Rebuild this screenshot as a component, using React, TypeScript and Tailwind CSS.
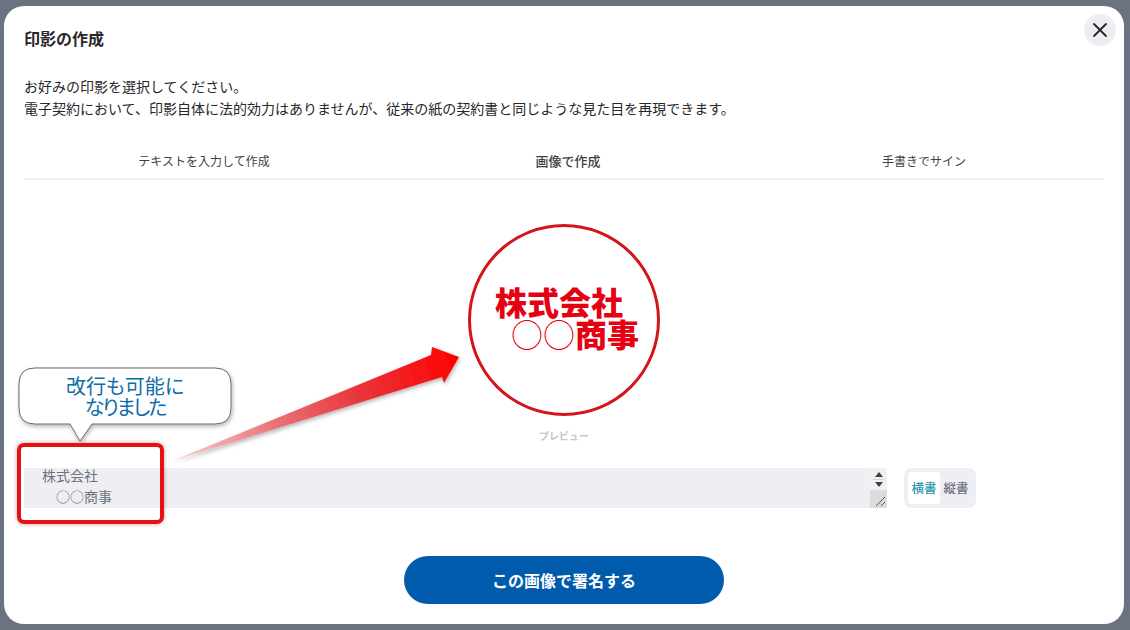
import { useEffect, useRef } from "react";

const font = { fontFamily: '"Noto Sans CJK JP", "Noto Sans", sans-serif' };

function StampPreview() {
  return (
    <div className="flex flex-col items-center">
      <div className="flex h-[192px] w-[192px] flex-col justify-center rounded-full border-[3px] border-[#d3151a] pb-[7px] pl-[24px] text-[32px] font-black leading-[32px] text-[#e60012]">
        <div className="whitespace-pre">株式会社</div>
        <div className="whitespace-pre pl-[16px]">
          <span className="font-extralight">○○</span>商事
        </div>
      </div>
      <div className="mt-[14px] text-[10px] font-bold leading-[12px] text-[#c4c6cb]">プレビュー</div>
    </div>
  );
}

function ScrollbarOverlay() {
  return (
    <div className="pointer-events-none absolute right-0 top-0 flex h-[40px] w-[17px] flex-col">
      <div className="flex flex-1 flex-col items-center justify-center gap-[2px] bg-[#f1f1f3]">
        <svg width="8" height="5" viewBox="0 0 8 5">
          <path d="M4 0 L8 5 H0 Z" fill="#3f3f46" />
        </svg>
        <div className="h-px w-[12px] bg-[#d4d4d8]" />
        <svg width="8" height="5" viewBox="0 0 8 5">
          <path d="M0 0 H8 L4 5 Z" fill="#3f3f46" />
        </svg>
      </div>
      <div className="h-[18px] bg-[#dcdcdc]">
        <svg width="17" height="18" viewBox="0 0 17 18" stroke="#52525b" strokeWidth="1">
          <path d="M6 16 L15 7 M11 16 L15 12" />
        </svg>
      </div>
    </div>
  );
}

function Annotations() {
  return (
    <>
      <svg className="pointer-events-none absolute left-0 top-0" width="1130" height="630">
        <defs>
          <linearGradient id="arrowFill" x1="170" y1="462" x2="460" y2="355" gradientUnits="userSpaceOnUse">
            <stop offset="0" stopColor="#f8d5d7" />
            <stop offset="0.35" stopColor="#e9757a" />
            <stop offset="0.65" stopColor="#e8353a" />
            <stop offset="1" stopColor="#ff0000" />
          </linearGradient>
          <filter id="softShadow" x="-10%" y="-20%" width="120%" height="140%">
            <feDropShadow dx="1" dy="2" stdDeviation="2" floodColor="#000" floodOpacity="0.3" />
          </filter>
        </defs>
        <path d="M172 461 L431 355 L432 347 L459 357 L444 383 L442 377 Z" fill="url(#arrowFill)" filter="url(#softShadow)" />
        <path
          d="M35 368 H215 Q231 368 231 384 V408 Q231 424 215 424 H92 L80 441 L70 424 H35 Q19 424 19 408 V384 Q19 368 35 368 Z"
          fill="#fff"
          stroke="#6b6b6b"
          strokeWidth="1"
          filter="url(#softShadow)"
        />
      </svg>
      <div className="absolute left-[19px] top-[375px] w-[212px] text-center text-[20px] leading-[21px] text-[#0f6ca8] [font-feature-settings:'palt']">
        改行も可能に
        <br />
        <span className="tracking-[-2px]">なりました</span>
      </div>
      <div className="absolute left-[17px] top-[443px] h-[81px] w-[147px] rounded-[7px] border-[4px] border-[#e60f12] shadow-[0_0_4px_rgba(120,0,0,0.4)]" />
    </>
  );
}

export default function App() {
  const textRef = useRef<HTMLTextAreaElement>(null);

  useEffect(() => {
    if (textRef.current) textRef.current.scrollTop = 3;
  }, []);

  return (
    <div style={font} className="relative h-[630px] w-[1130px] overflow-hidden bg-[#6b7280] px-[4px] pb-[6px] pt-[6px]">
      <div className="relative h-[618px] w-[1120px] rounded-[20px] bg-white px-[20px] pt-[21px]">
        <div className="flex items-center justify-between">
          <h1 className="text-[16px] font-bold leading-[22px] text-[#27272a]">印影の作成</h1>
          <button className="absolute right-[8px] top-[8px] flex h-[32px] w-[32px] items-center justify-center rounded-full bg-[#eeeef2]">
            <svg width="16" height="16" viewBox="0 0 16 16" fill="none" stroke="#27272a" strokeWidth="1.8" strokeLinecap="round">
              <path d="M2 2 L14 14 M14 2 L2 14" />
            </svg>
          </button>
        </div>

        <div className="mt-[26px] text-[14px] leading-[22px] text-[#27272a]">
          <p>お好みの印影を選択してください。</p>
          <p>電子契約において、印影自体に法的効力はありませんが、従来の紙の契約書と同じような見た目を再現できます。</p>
        </div>

        <div className="mt-[33px] grid grid-cols-3 border-b-2 border-[#eef2f7] pb-[8px] text-center text-[12px] leading-[18px] text-[#3f3f46]">
          <div>テキストを入力して作成</div>
          <div className="pl-[8px] text-[13px] font-medium">画像で作成</div>
          <div>手書きでサイン</div>
        </div>

        <div className="mt-[44px]">
          <StampPreview />
        </div>

        <div className="mt-[26px] flex items-center">
          <div className="relative h-[40px] w-[863px]">
            <textarea
              ref={textRef}
              readOnly
              rows={2}
              value={"株式会社\n　○○商事"}
              className="block h-[40px] w-full overflow-hidden bg-[#efeef3] pb-[12px] pl-[18px] pr-[18px] text-[14px] leading-[21px] text-[#6b7280] outline-none"
            />
            <ScrollbarOverlay />
          </div>
          <div className="ml-[17px] flex h-[40px] w-[72px] items-center rounded-[8px] bg-[#efeef3] p-[4px] text-[12.5px] font-medium">
            <div className="flex h-[32px] w-[32px] items-center justify-center rounded-[4px] bg-white text-[#2a96ad]">横書</div>
            <div className="flex h-[32px] flex-1 items-center justify-center text-[#6b7280]">縦書</div>
          </div>
        </div>

        <div className="mt-[48px] flex justify-center">
          <button className="h-[48px] w-[320px] rounded-full bg-[#005bac] text-[16px] font-bold text-white">この画像で署名する</button>
        </div>
      </div>
      <Annotations />
    </div>
  );
}
